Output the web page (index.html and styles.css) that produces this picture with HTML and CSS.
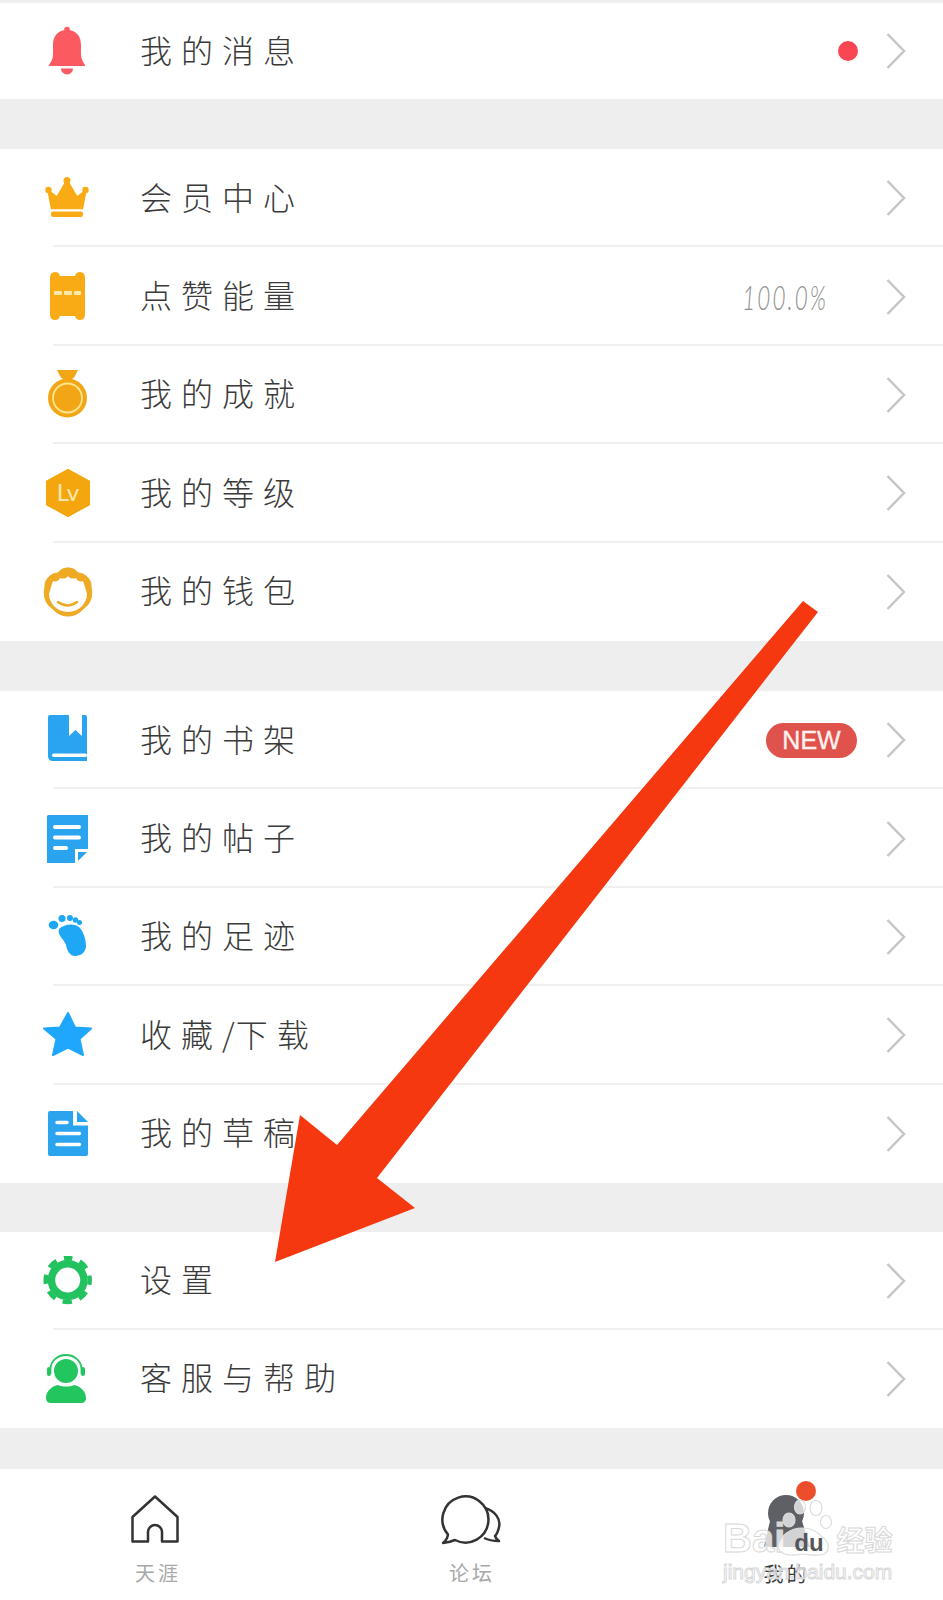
FILE: index.html
```html
<!DOCTYPE html>
<html lang="zh-CN">
<head>
  <meta charset="UTF-8" />
  <meta name="viewport" content="width=device-width, initial-scale=1.0" />
  <title>我的</title>
  <link rel="stylesheet" href="styles.css">
</head>
<body>
  <section class="group group-first">
    <div class="row row-short">
      <svg class="icon" viewBox="-2 0 54 50"><circle cx="25" cy="3.500" r="2.800" fill="#fa5a60"/><path d="M25 4C15 4 11 11 11 19V28C11 33 9 36 7 39V40H43V39C41 36 39 33 39 28V19C39 11 35 4 25 4Z" fill="#fa5a60"/><path d="M19 42.500H31A6 6 0 0 1 19 42.500Z" fill="#fa5a60"/></svg>
      <span class="label">我的消息</span>
      <span class="dot"></span>
      <svg class="chevron" viewBox="0 0 20 36"><polyline points="1.500,1 18,18 1.500,35"/></svg>
    </div>
  </section>

  <section class="group">
    <div class="row">
      <svg class="icon" viewBox="-2 0 54 50" fill="#f9ab15"><circle cx="25" cy="7.500" r="3.500"/><circle cx="6.500" cy="17" r="3.200"/><circle cx="43.500" cy="17" r="3.200"/><path d="M9.500 35.500L6 17L15 24L25 7L35 24L44 17L40.500 35.500Z" stroke="#f9ab15" stroke-width="1.500" stroke-linejoin="round"/><rect x="9" y="38.500" width="32" height="5.500" rx="2"/></svg>
      <span class="label">会员中心</span>
      <svg class="chevron" viewBox="0 0 20 36"><polyline points="1.500,1 18,18 1.500,35"/></svg>
    </div>
    <div class="row">
      <svg class="icon" viewBox="-2 0 54 50"><path d="M8 6Q8 0 13 0Q17 0 18 4H33Q34 0 38 0Q43 0 43 6V42Q43 48 38 48Q34 48 33 44H18Q17 48 13 48Q8 48 8 42Z" fill="#f9ab15"/><g fill="#ffe9a8"><rect x="12" y="19" width="8" height="4" rx="1"/><rect x="22" y="19" width="8" height="4" rx="1"/><rect x="32" y="19" width="7" height="4" rx="1"/></g></svg>
      <span class="label">点赞能量</span>
      <span class="percent">100.0%</span>
      <svg class="chevron" viewBox="0 0 20 36"><polyline points="1.500,1 18,18 1.500,35"/></svg>
    </div>
    <div class="row">
      <svg class="icon" viewBox="-2 0 54 50"><path d="M15 0H36L33 6Q32 8 30 9H21Q19 8 18 6Z" fill="#f2a615"/><circle cx="25.500" cy="28" r="19.500" fill="#f2a615"/><circle cx="25.500" cy="28" r="14.500" fill="none" stroke="#ffe48f" stroke-width="1.800"/></svg>
      <span class="label">我的成就</span>
      <svg class="chevron" viewBox="0 0 20 36"><polyline points="1.500,1 18,18 1.500,35"/></svg>
    </div>
    <div class="row">
      <svg class="icon" viewBox="-2 0 54 50"><polygon points="26,2 47,13.500 47,36.500 26,48 5,36.500 5,13.500" fill="#f4a60f" stroke="#f4a60f" stroke-width="2" stroke-linejoin="round"/><text class="lv" x="26" y="33" text-anchor="middle">Lv</text></svg>
      <span class="label">我的等级</span>
      <svg class="chevron" viewBox="0 0 20 36"><polyline points="1.500,1 18,18 1.500,35"/></svg>
    </div>
    <div class="row">
      <svg class="icon" viewBox="-2 0 54 50" stroke-linecap="round"><path fill="#eeaa22" stroke="#eeaa22" stroke-width="1" d="M26 1C31 1 34 3 36 6C43 6 50 13 49 20C51 27 49 37 42 41C37 47 31 49 26 49C21 49 15 47 10 41C3 37 1 27 3 20C2 13 9 6 16 6C18 3 21 1 26 1Z"/><path fill="#fff" d="M26 9C24 12 21 12 18 11C16 15 13 15 11 14C9 19 8 24 7 27C7 36 15 45 26 45C37 45 45 36 45 27C44 24 43 19 41 14C39 15 36 15 34 11C31 12 28 12 26 9Z"/><path fill="none" stroke="#eeaa22" stroke-width="2.500" d="M16 35Q25.500 42 35 35"/></svg>
      <span class="label">我的钱包</span>
      <svg class="chevron" viewBox="0 0 20 36"><polyline points="1.500,1 18,18 1.500,35"/></svg>
    </div>
  </section>

  <section class="group group-mine">
    <div class="row">
      <svg class="icon" viewBox="-2 0 54 50"><path d="M8 0H43Q45 0 45 2V46H11Q6 46 6 41V2Q6 0 8 0Z" fill="#2ba4ef"/><path d="M27 0H40V21L33.500 15L27 21Z" fill="#fff"/><rect x="10" y="38.500" width="35" height="3.500" rx="1.700" fill="#fff"/></svg>
      <span class="label">我的书架</span>
      <span class="pill">NEW</span>
      <svg class="chevron" viewBox="0 0 20 36"><polyline points="1.500,1 18,18 1.500,35"/></svg>
    </div>
    <div class="row">
      <svg class="icon" viewBox="-2 0 54 50"><path d="M6 1H46V36L34 49H5V2Z" fill="#2ba4ef"/><path d="M13 13H37M13 23.500H37M13 34H24" stroke="#fff" stroke-width="4" stroke-linecap="round"/><path d="M33 49V35H47V49Z" fill="#fff"/><path d="M36 38H45L36 47Z" fill="#2ba4ef"/></svg>
      <span class="label">我的帖子</span>
      <svg class="chevron" viewBox="0 0 20 36"><polyline points="1.500,1 18,18 1.500,35"/></svg>
    </div>
    <div class="row">
      <svg class="icon" viewBox="-2 0 54 50" fill="#1ea7f5"><ellipse cx="11.500" cy="13" rx="4.800" ry="4.200"/><circle cx="20" cy="6.500" r="3.500"/><circle cx="28" cy="6" r="3"/><circle cx="33.500" cy="8" r="2.700"/><circle cx="37.500" cy="10.500" r="2.500"/><path d="M17 17C22 12 32 11 37 15C42 20 44 28 44 34C44 40 39 44 33 44C28 44 25 39 24 33C23 28 15 24 17 17Z"/></svg>
      <span class="label">我的足迹</span>
      <svg class="chevron" viewBox="0 0 20 36"><polyline points="1.500,1 18,18 1.500,35"/></svg>
    </div>
    <div class="row">
      <svg class="icon" viewBox="-2 0 54 50"><polygon points="26,3 33,17.500 49,18.500 37.500,29 41,45 26,37.500 11,45 14.500,29 2,18.500 18,17.500" fill="#1ea7fd" stroke="#1ea7fd" stroke-width="2" stroke-linejoin="round"/></svg>
      <span class="label">收藏<span class="slash">/</span>下载</span>
      <svg class="chevron" viewBox="0 0 20 36"><polyline points="1.500,1 18,18 1.500,35"/></svg>
    </div>
    <div class="row">
      <svg class="icon" viewBox="-2 0 54 50"><path d="M8 2H31V16.500H46V45Q46 47 44 47H8Q6 47 6 45V4Q6 2 8 2Z" fill="#2ba4ef"/><path d="M35 2L46 13H35Z" fill="#2ba4ef"/><path d="M15 13.500H25M15 24.500H37.500M15 35.500H37.500" stroke="#fff" stroke-width="3.500" stroke-linecap="round"/></svg>
      <span class="label">我的草稿</span>
      <svg class="chevron" viewBox="0 0 20 36"><polyline points="1.500,1 18,18 1.500,35"/></svg>
    </div>
  </section>

  <section class="group group-last">
    <div class="row">
      <svg class="icon" viewBox="-2 0 54 50" fill="none" stroke="#22c35e"><circle cx="25.700" cy="24" r="16.250" stroke-width="7.500"/><circle cx="25.700" cy="24" r="22" stroke-width="4.500" stroke-dasharray="9.500 7.780" stroke-dashoffset="4.750" transform="rotate(-90 25.700 24)"/></svg>
      <span class="label">设置</span>
      <svg class="chevron" viewBox="0 0 20 36"><polyline points="1.500,1 18,18 1.500,35"/></svg>
    </div>
    <div class="row">
      <svg class="icon" viewBox="-2 0 54 50" fill="#22c55e"><circle cx="24" cy="17" r="12"/><path d="M8.500 20V15A15.500 14 0 0 1 39.500 15V20" fill="none" stroke="#22c55e" stroke-width="1.800"/><rect x="5" y="13" width="4" height="9" rx="2"/><rect x="39" y="13" width="4" height="9" rx="2"/><path d="M4 44C4 36 11 32 16 31C20 33 28 33 32 31C37 32 44 36 44 44Q44 49 39 49H9Q4 49 4 44Z"/></svg>
      <span class="label">客服与帮助</span>
      <svg class="chevron" viewBox="0 0 20 36"><polyline points="1.500,1 18,18 1.500,35"/></svg>
    </div>
  </section>

  <nav class="tabs">
    <div class="tab tab-home">
      <svg class="tab-icon" width="48" height="48" viewBox="0 0 48 48"><path d="M1.500 46.500V22L24 1.500L46.500 22V46.500H31V37A7 7 0 0 0 17 37V46.500Z"/></svg>
      <span class="tab-label">天涯</span>
    </div>
    <div class="tab tab-forum">
      <svg class="tab-icon" width="60" height="50" viewBox="0 0 60 50"><path d="M7 39.500A23 23 0 1 1 14 45Q8 47.500 2 48Q6 45 7 39.500Z"/><path d="M44 13C54 16 60 24 58 32C57 37 55 40 54 41Q55 44 58 46Q49 46 43 43"/></svg>
      <span class="tab-label">论坛</span>
    </div>
    <div class="tab tab-mine">
      <svg class="avatar" width="64" height="56" viewBox="0 0 64 56"><circle cx="32" cy="18" r="18" fill="#5f6066"/><path d="M16 26H48L56 52H10Z" fill="#5f6066"/></svg>
      <span class="tab-dot"></span>
      <span class="tab-label tab-label-on">我的</span>
    </div>

    <div class="watermark">
      <div class="mark-top">
        <span class="mark-latin">Bai</span>
        <svg class="paw" width="60" height="58" viewBox="0 0 60 58" fill="rgba(255,255,255,0.72)" stroke="#dcdcdc" stroke-width="1.200"><ellipse cx="17" cy="20" rx="6" ry="7"/><ellipse cx="28" cy="7" rx="5.500" ry="7"/><ellipse cx="44" cy="8" rx="6" ry="7.500"/><ellipse cx="54" cy="22" rx="5.500" ry="6.500"/><path d="M6 46C8 36 18 28 30 28C40 28 46 32 50 37C57 41 59 50 52 54C44 57 36 54 30 54C22 56 6 56 6 46Z"/></svg>
        <span class="mark-du">du</span>
        <span class="mark-cn">经验</span>
      </div>
      <div class="mark-url">jingyan.baidu.com</div>
    </div>
  </nav>

  <svg class="arrow" width="943" height="1600" viewBox="0 0 943 1600"><polygon points="803,601 818,612 377,1178 415,1208 275,1262 300,1115 337,1145" fill="#f5380f"/></svg>
</body>
</html>
```

FILE: styles.css
```css
* {
  box-sizing: border-box;
}
html, body {
  margin: 0;
  padding: 0;
}
body {
  position: relative;
  display: flex;
  flex-direction: column;
  width: 943px;
  height: 1600px;
  overflow: hidden;
  background-color: #eeeeee;
  color: #3a3a3a;
  font-family: "Noto Sans CJK SC", "Noto Sans", sans-serif;
}
.group {
  margin-bottom: 50px;
  background: #ffffff;
}
.group-first {
  margin-top: 3px;
}
.group-mine {
  margin-bottom: 49px;
}
.group-last {
  margin-bottom: 0;
}
.row {
  display: flex;
  align-items: center;
  height: 98.4px;
  padding-right: 37px;
  background-image: linear-gradient(#f0f0f0, #f0f0f0);
  background-repeat: no-repeat;
  background-position: right bottom;
  background-size: calc(100% - 53px) 2px;
}
.row:last-child {
  background-image: none;
}
.row-short {
  height: 96px;
}
.group-last .row {
  height: 98px;
}
.icon {
  flex: none;
  width: 54px;
  height: 50px;
  margin: 0 46px 0 40px;
}
.lv {
  fill: #ffe8b0;
  font-family: Lato, sans-serif;
  font-size: 24px;
}
.label {
  flex: 1;
  padding-bottom: 5px;
  font-size: 32px;
  font-weight: 300;
  letter-spacing: 9px;
}
.slash {
  letter-spacing: 1px;
}
.chevron {
  flex: none;
  width: 20px;
  height: 36px;
  fill: none;
  stroke: #c6c6c6;
  stroke-width: 2.5;
}
.dot {
  width: 20px;
  height: 20px;
  margin-right: 28px;
  border-radius: 50%;
  background: #fa4650;
}
.percent {
  margin-right: 58px;
  color: #8f8f8f;
  font-family: Lato, sans-serif;
  font-size: 33px;
  font-style: italic;
  font-weight: 300;
  letter-spacing: 3px;
  transform: scaleX(0.68);
  transform-origin: right center;
}
.pill {
  display: flex;
  align-items: center;
  justify-content: center;
  width: 91px;
  height: 35px;
  margin-right: 29px;
  border-radius: 18px;
  background: #e0524c;
  color: #fdf1ef;
  font-family: "Liberation Sans", sans-serif;
  font-size: 25px;
  -webkit-text-stroke: 0.4px #fdf1ef;
}
.tabs {
  position: relative;
  flex: 1;
  display: grid;
  grid-template-columns: 302px 308px 333px;
  margin-top: 41px;
  background: #ffffff;
}
.tab {
  position: relative;
  display: flex;
  flex-direction: column;
  align-items: center;
  padding-top: 26px;
}
.tab-mine {
  padding-left: 20px;
}
.tab-icon {
  fill: none;
  stroke: #333333;
  stroke-width: 2.5;
  stroke-linejoin: round;
}
.tab-home .tab-icon {
  margin-left: 8px;
}
.tab-forum .tab-icon {
  margin-left: 30px;
}
.tab-label {
  margin-top: 15px;
  margin-left: 14px;
  color: #a8a8a8;
  font-size: 20px;
  line-height: 30px;
  letter-spacing: 3px;
}
.tab-forum .tab-label {
  margin-top: 13px;
  margin-left: 32px;
}
.tab-label-on {
  margin-top: 8px;
  margin-left: 0;
  color: #3a3a3a;
}
.avatar {
  margin-left: -2px;
}
.tab-dot {
  position: absolute;
  top: 12px;
  left: 186px;
  width: 20px;
  height: 20px;
  border-radius: 50%;
  background: #ec4e2c;
}
.watermark {
  position: absolute;
  top: 50px;
  left: 723px;
  width: 175px;
}
.mark-top {
  display: flex;
  align-items: center;
  height: 40px;
}
.mark-latin {
  color: rgba(255, 255, 255, 0.75);
  font-family: "Liberation Sans", sans-serif;
  font-size: 40px;
  font-weight: 700;
  -webkit-text-stroke: 1px #d8d8d8;
}
.paw {
  flex: none;
  margin: -20px 0 0 -13px;
}
.mark-du {
  margin: 8px 0 0 -38px;
  color: #55565b;
  font-family: "Liberation Sans", sans-serif;
  font-size: 24px;
  font-weight: 700;
}
.mark-cn {
  margin-left: 13px;
  color: rgba(255, 255, 255, 0.75);
  font-size: 28px;
  font-weight: 700;
  white-space: nowrap;
  -webkit-text-stroke: 1px #d8d8d8;
}
.mark-url {
  margin-top: 1px;
  color: rgba(255, 255, 255, 0.6);
  font-family: "Liberation Sans", sans-serif;
  font-size: 21px;
  white-space: nowrap;
  -webkit-text-stroke: 1px #d8d8d8;
}
.arrow {
  position: absolute;
  top: 0;
  left: 0;
  pointer-events: none;
}
```
